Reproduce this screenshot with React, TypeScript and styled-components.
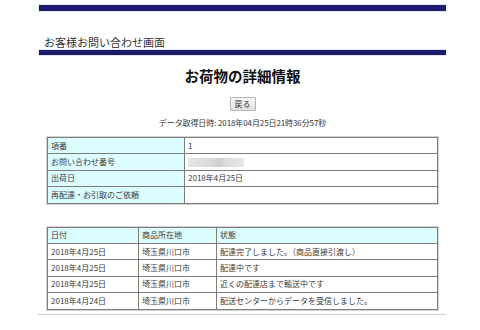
import styled, { createGlobalStyle } from 'styled-components';

const GlobalStyle = createGlobalStyle`
	body {
		margin: 0;
		background: #fff;
		color: #222;
		font-family: 'Noto Sans CJK JP', 'Noto Sans', sans-serif;
	}
`;

const Page = styled.div`
	width: 407px;
	margin-left: 39px;
	padding-top: 5px;
	display: flex;
	flex-direction: column;
`;

const NavyBar = styled.div<{ $h: number }>`
	height: ${({ $h }) => $h}px;
	background: #1b1b6b;
	box-shadow: 0 0 1px #6a6aa8;
`;

const ScreenTitle = styled.div`
	margin-top: 23px;
	height: 16px;
	padding-left: 5px;
	font-size: 11px;
	line-height: 16px;
	color: #333;
`;

const Heading = styled.h1`
	margin: 11px 0 0;
	font-size: 14.5px;
	line-height: 20px;
	font-weight: bold;
	text-align: center;
	color: #111;
`;

const ButtonRow = styled.div`
	margin-top: 11px;
	display: flex;
	justify-content: center;
`;

const BackButton = styled.button`
	height: 14px;
	padding: 0 4px;
	font-family: inherit;
	font-size: 8px;
	line-height: 12px;
	color: #333;
	background: linear-gradient(#f6f6f6, #e2e2e2);
	border: 1px solid #b4b4b4;
	border-radius: 1px;
`;

const FetchedAt = styled.div`
	margin-top: 6px;
	font-size: 8px;
	line-height: 12px;
	letter-spacing: -0.1px;
	text-align: center;
	color: #333;
`;

const Table = styled.table<{ $top: number }>`
	margin: ${({ $top }) => $top}px 0 0 8px;
	width: 391px;
	border-collapse: collapse;
	border: 1px solid #8a8a8a;
	outline: 1px solid #d4d4d4;
	font-size: 8px;
	color: #3a3a3a;
	table-layout: fixed;
`;

const Cell = styled.td<{ $head?: boolean }>`
	height: 15.4px;
	padding: 0 3px;
	border: 1px solid #7c7c7c;
	background: ${({ $head }) => ($head ? '#dcfdfd' : '#fff')};
	line-height: 14px;
	white-space: nowrap;
	overflow: hidden;
`;

const Redacted = styled.span`
	display: inline-block;
	width: 56px;
	height: 9px;
	vertical-align: middle;
	background: linear-gradient(90deg, #e4e4e4 0%, #dadada 40%, #cfcfcf 55%, #dcdcdc 70%, #e8e8e8 100%);
	filter: blur(0.5px);
`;

const Rule = styled.div`
	margin-top: 4px;
	margin-left: -1px;
	height: 1px;
	background: #d2d2d2;
`;

const history = [
	{ date: '2018年4月25日', place: '埼玉県川口市', status: '配達完了しました。（商品直接引渡し）' },
	{ date: '2018年4月25日', place: '埼玉県川口市', status: '配達中です' },
	{ date: '2018年4月25日', place: '埼玉県川口市', status: '近くの配達店まで輸送中です' },
	{ date: '2018年4月24日', place: '埼玉県川口市', status: '配送センターからデータを受信しました。' },
];

export default function App() {
	return (
		<>
			<GlobalStyle />
			<Page>
				<NavyBar $h={6} />
				<ScreenTitle>お客様お問い合わせ画面</ScreenTitle>
				<NavyBar $h={5} />
				<Heading>お荷物の詳細情報</Heading>
				<ButtonRow>
					<BackButton>戻る</BackButton>
				</ButtonRow>
				<FetchedAt>データ取得日時: 2018年04月25日21時36分57秒</FetchedAt>

				<Table $top={8}>
					<colgroup>
						<col style={{ width: 137 }} />
						<col />
					</colgroup>
					<tbody>
						<tr>
							<Cell $head>項番</Cell>
							<Cell>1</Cell>
						</tr>
						<tr>
							<Cell $head>お問い合わせ番号</Cell>
							<Cell>
								<Redacted />
							</Cell>
						</tr>
						<tr>
							<Cell $head>出荷日</Cell>
							<Cell>2018年4月25日</Cell>
						</tr>
						<tr>
							<Cell $head>再配達・お引取のご依頼</Cell>
							<Cell></Cell>
						</tr>
					</tbody>
				</Table>

				<Table $top={23}>
					<colgroup>
						<col style={{ width: 91 }} />
						<col style={{ width: 78 }} />
						<col />
					</colgroup>
					<tbody>
						<tr>
							<Cell $head>日付</Cell>
							<Cell $head>商品所在地</Cell>
							<Cell $head>状態</Cell>
						</tr>
						{history.map((row, i) => (
							<tr key={i}>
								<Cell>{row.date}</Cell>
								<Cell>{row.place}</Cell>
								<Cell>{row.status}</Cell>
							</tr>
						))}
					</tbody>
				</Table>
				<Rule />
			</Page>
		</>
	);
}
